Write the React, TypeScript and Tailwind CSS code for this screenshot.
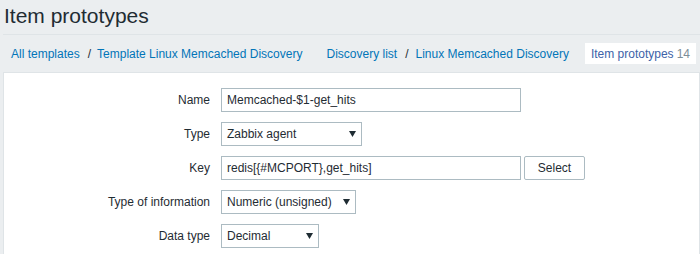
import React from 'react';

const Arrow = () => (
  <svg width="7" height="6" viewBox="0 0 7 6" className="shrink-0">
    <polygon points="0,0 7,0 3.5,6" fill="#1f2c33" />
  </svg>
);

const Field = ({ label, children }: { label: string; children: React.ReactNode }) => (
  <div className="flex items-center h-[24px]">
    <label className="w-[206px] text-right shrink-0">{label}</label>
    <div className="ml-[11px] flex items-center">{children}</div>
  </div>
);

const TextBox = ({ value, width }: { value: string; width: string }) => (
  <div className={`${width} h-[24px] border border-[#acbbc2] bg-white px-[5px] flex items-center`}>
    {value}
  </div>
);

const SelectBox = ({ value, width }: { value: string; width: string }) => (
  <div className={`${width} h-[24px] border border-[#acbbc2] bg-white pl-[5px] pr-[5px] flex items-center justify-between`}>
    <span>{value}</span>
    <Arrow />
  </div>
);

export default function App() {
  return (
    <div
      className="w-[700px] h-[254px] overflow-hidden bg-[#ebeef0] text-[12px] text-[#1f2c33]"
      style={{ fontFamily: '"Liberation Sans", Arial, sans-serif' }}
    >
      <div className="ml-[3px]">
        <div className="h-[35px] border-b border-[#dfe4e7] pt-[6px]">
          <h1 className="text-[21px] leading-[20px] ml-[1px] text-[#1f2c33]">Item prototypes</h1>
        </div>

        <div className="h-[37px] flex items-center pl-[8px]">
          <a className="text-[#0275b8]">All templates</a>
          <span className="ml-[8px] mr-[6px]">/</span>
          <a className="text-[#0275b8]">Template Linux Memcached Discovery</a>
          <a className="ml-[24px] text-[#0275b8]">Discovery list</a>
          <span className="ml-[8px] mr-[7px]">/</span>
          <a className="text-[#0275b8]">Linux Memcached Discovery</a>
          <div className="ml-[16px] h-[21px] bg-white px-[6px] flex items-center text-[#3d63a8]">
            Item prototypes <span className="ml-[3px] text-[#7d8e98]">14</span>
          </div>
        </div>

        <div className="bg-white border border-[#dfe4e7] h-[220px] pt-[15px] flex flex-col gap-[10px]">
          <Field label="Name">
            <TextBox value="Memcached-$1-get_hits" width="w-[300px]" />
          </Field>
          <Field label="Type">
            <SelectBox value="Zabbix agent" width="w-[141px]" />
          </Field>
          <Field label="Key">
            <TextBox value="redis[{#MCPORT},get_hits]" width="w-[300px]" />
            <button className="ml-[3px] w-[61px] h-[24px] border border-[#acbbc2] rounded-[2px] bg-white text-[#1f2c33]">
              Select
            </button>
          </Field>
          <Field label="Type of information">
            <SelectBox value="Numeric (unsigned)" width="w-[135px]" />
          </Field>
          <Field label="Data type">
            <SelectBox value="Decimal" width="w-[98px]" />
          </Field>
        </div>
      </div>
    </div>
  );
}
